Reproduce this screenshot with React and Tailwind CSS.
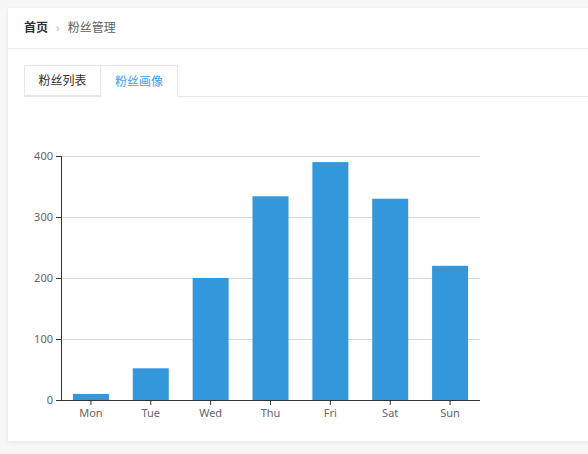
import React from 'react';

const FONT = { fontFamily: '"Noto Sans", "Noto Sans CJK SC", sans-serif' };

const days = ['Mon', 'Tue', 'Wed', 'Thu', 'Fri', 'Sat', 'Sun'];
const values = [10, 52, 200, 334, 390, 330, 220];

// chart geometry (svg coords)
const X0 = 37;
const X1 = 456;
const Y0 = 303;
const YTOP = 59;
const step = (X1 - X0) / 7;
const scale = (Y0 - YTOP) / 400;

const BarChart = () => (
  <svg width="480" height="330" className="block">
    {[0, 100, 200, 300, 400].map((v) => {
      const y = Y0 - v * scale;
      return (
        <g key={v}>
          {v > 0 && <line x1={X0} x2={X1} y1={y + 0.5} y2={y + 0.5} stroke="#d9d9d9" strokeWidth="1" />}
          <line x1={X0 - 5} x2={X0} y1={y + 0.5} y2={y + 0.5} stroke="#333" strokeWidth="1" />
          <text x={X0 - 8} y={y + 4} textAnchor="end" fontSize="11" fill="#666">
            {v}
          </text>
        </g>
      );
    })}
    {values.map((v, i) => {
      const cx = X0 + step * (i + 0.5);
      const h = v * scale;
      return (
        <g key={days[i]}>
          <rect x={cx - 18} y={Y0 - h} width="36" height={h} fill="#3398db" />
          <line x1={cx} x2={cx} y1={Y0} y2={Y0 + 5} stroke="#333" strokeWidth="1" />
          <text x={cx} y={Y0 + 17} textAnchor="middle" fontSize="11" fill="#666">
            {days[i]}
          </text>
        </g>
      );
    })}
    <line x1={X0 + 0.5} x2={X0 + 0.5} y1={YTOP} y2={Y0} stroke="#333" strokeWidth="1" />
    <line x1={X0} x2={X1} y1={Y0 + 0.5} y2={Y0 + 0.5} stroke="#333" strokeWidth="1" />
  </svg>
);

export default function App() {
  return (
    <div className="w-[588px] h-[454px] overflow-hidden bg-[#f7f7f7] pt-2 pl-2" style={FONT}>
      <div className="w-[620px] h-[433px] bg-white shadow-[0_1px_4px_rgba(0,0,0,0.08)]">
        {/* breadcrumb */}
        <div className="h-[41px] flex items-center px-4 border-b border-[#ebebeb] text-xs">
          <span className="font-bold text-[#303133]">首页</span>
          <span className="mx-2 text-[#c0c4cc]">›</span>
          <span className="text-[#606266]">粉丝管理</span>
        </div>
        {/* tabs */}
        <div className="px-4 pt-4">
          <div className="flex border-b border-[#e4e7ed] text-xs">
            <div className="w-[77px] h-[31px] flex items-center justify-center border border-[#e4e7ed] text-[#303133] -mb-px bg-white">
              粉丝列表
            </div>
            <div className="w-[77px] h-[32px] flex items-center justify-center border-t border-r border-[#e4e7ed] text-[#409eff] bg-white -mb-px">
              粉丝画像
            </div>
          </div>
          <BarChart />
        </div>
      </div>
    </div>
  );
}
